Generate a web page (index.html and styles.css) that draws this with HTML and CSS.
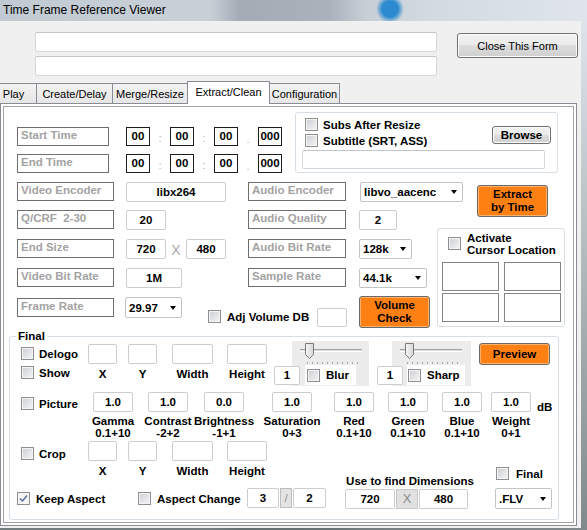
FILE: index.html
```html
<!DOCTYPE html>
<html lang="en">
<head>
    <meta charset="UTF-8">
    <title>Time Frame Reference Viewer</title>
    <link rel="stylesheet" href="styles.css">
</head>
<body>
<div class="window">
    <div class="titlebar">Time Frame Reference Viewer</div>
    <div class="client">
        <div class="top">
            <div class="paths">
                <div class="path"></div>
                <div class="path"></div>
            </div>
            <div class="btn close">Close This Form</div>
        </div>

        <div class="tabs">
            <div class="tab t-play">Play</div>
            <div class="tab t-create">Create/Delay</div>
            <div class="tab t-merge">Merge/Resize</div>
            <div class="tab t-extract active">Extract/Clean</div>
            <div class="tab t-config">Configuration</div>
        </div>

        <div class="tabctl">
            <div class="page">

                <!-- times + subtitles -->
                <div class="sec-a">
                    <div class="times">
                        <div class="row">
                            <div class="lbl w92">Start Time</div>
                            <div class="tt first">00</div><span class="sep">:</span>
                            <div class="tt">00</div><span class="sep">:</span>
                            <div class="tt">00</div><span class="sep dot">.</span>
                            <div class="tt">000</div>
                        </div>
                        <div class="row">
                            <div class="lbl w92">End Time</div>
                            <div class="tt first">00</div><span class="sep">:</span>
                            <div class="tt">00</div><span class="sep">:</span>
                            <div class="tt">00</div><span class="sep dot">.</span>
                            <div class="tt">000</div>
                        </div>
                    </div>
                    <div class="grp subs">
                        <div class="subs-top">
                            <div class="subs-checks">
                                <div class="ck"><span class="cb"></span><span class="ckt">Subs After Resize</span></div>
                                <div class="ck"><span class="cb"></span><span class="ckt">Subtitle (SRT, ASS)</span></div>
                            </div>
                            <div class="btn browse">Browse</div>
                        </div>
                        <div class="path subpath"></div>
                    </div>
                </div>

                <!-- encoders -->
                <div class="sec-b1">
                    <div class="fields">
                        <div class="row">
                            <div class="lbl w97">Video Encoder</div>
                            <div class="vb enc">libx264</div>
                            <div class="lbl w98 aud1">Audio Encoder</div>
                            <div class="combo aenc"><span>libvo_aacenc</span><span class="arr"></span></div>
                        </div>
                        <div class="row">
                            <div class="lbl w97">Q/CRF&nbsp; 2-30</div>
                            <div class="vb crf">20</div>
                            <div class="lbl w98 aud2">Audio Quality</div>
                            <div class="vb aq">2</div>
                        </div>
                    </div>
                    <div class="btn orange extract">Extract<br>by Time</div>
                </div>

                <div class="sec-b2">
                    <div class="fields2">
                        <div class="row">
                            <div class="lbl w97">End Size</div>
                            <div class="vb size">720</div>
                            <span class="xsep">X</span>
                            <div class="vb size2">480</div>
                            <div class="lbl w98 aud1">Audio Bit Rate</div>
                            <div class="combo abr"><span>128k</span><span class="arr"></span></div>
                        </div>
                        <div class="row r4">
                            <div class="lbl w97">Video Bit Rate</div>
                            <div class="vb vbr">1M</div>
                            <div class="lbl w98 aud3">Sample Rate</div>
                            <div class="combo sr"><span>44.1k</span><span class="arr"></span></div>
                        </div>
                        <div class="row r5">
                            <div class="lbl w97 fr">Frame Rate</div>
                            <div class="combo fps"><span>29.97</span><span class="arr"></span></div>
                            <div class="ck adj"><span class="cb"></span><span class="ckt">Adj Volume DB</span></div>
                            <div class="vb vol"></div>
                            <div class="btn orange volcheck">Volume<br>Check</div>
                        </div>
                    </div>
                    <div class="grp cursor">
                        <div class="cur-head">
                            <span class="cb"></span>
                            <span class="cur-text">Activate<br>Cursor Location</span>
                        </div>
                        <div class="cur-grid">
                            <div></div><div></div><div></div><div></div>
                        </div>
                    </div>
                </div>

                <!-- final -->
                <fieldset class="final">
                    <legend>Final</legend>

                    <div class="drow">
                        <div class="chkcol">
                            <div class="ck"><span class="cb"></span><span class="ckt">Delogo</span></div>
                            <div class="ck second"><span class="cb"></span><span class="ckt">Show</span></div>
                        </div>
                        <div class="fcol w29"><div class="vb"></div><div class="cap">X</div></div>
                        <div class="fcol w29 g11"><div class="vb"></div><div class="cap">Y</div></div>
                        <div class="fcol w41 g15"><div class="vb"></div><div class="cap">Width</div></div>
                        <div class="fcol w40 g14"><div class="vb"></div><div class="cap">Height</div></div>

                        <div class="vb one">1</div>
                        <div class="slider s1">
                            <div class="track"></div>
                            <svg class="thumb" width="11" height="17" viewBox="0 0 11 17">
                                <defs>
                                    <linearGradient id="tg" x1="0" y1="0" x2="1" y2="0">
                                        <stop offset="0" stop-color="#f7f7f7"/>
                                        <stop offset="1" stop-color="#d6d6d6"/>
                                    </linearGradient>
                                </defs>
                                <path d="M1.5 0.5 H9.5 V11.5 L5.5 15.5 L1.5 11.5 Z" fill="url(#tg)" stroke="#7a7a7a"/>
                            </svg>
                            <div class="ticks"></div>
                            <div class="sfoot"><span class="cb"></span><span class="ckt">Blur</span></div>
                        </div>

                        <div class="vb one two">1</div>
                        <div class="slider s2">
                            <div class="track"></div>
                            <svg class="thumb" width="11" height="17" viewBox="0 0 11 17">
                                <path d="M1.5 0.5 H9.5 V11.5 L5.5 15.5 L1.5 11.5 Z" fill="url(#tg)" stroke="#7a7a7a"/>
                            </svg>
                            <div class="ticks"></div>
                            <div class="sfoot"><span class="cb"></span><span class="ckt">Sharp</span></div>
                        </div>

                        <div class="btn orange preview">Preview</div>
                    </div>

                    <div class="prow">
                        <div class="chkcol">
                            <div class="ck"><span class="cb"></span><span class="ckt">Picture</span></div>
                        </div>
                        <div class="pcol"><div class="vb">1.0</div><div class="cap2">Gamma<br>0.1+10</div></div>
                        <div class="pcol p15"><div class="vb">1.0</div><div class="cap2">Contrast<br>-2+2</div></div>
                        <div class="pcol p16"><div class="vb">0.0</div><div class="cap2">Brightness<br>-1+1</div></div>
                        <div class="pcol p28"><div class="vb">1.0</div><div class="cap2">Saturation<br>0+3</div></div>
                        <div class="pcol p22"><div class="vb">1.0</div><div class="cap2">Red<br>0.1+10</div></div>
                        <div class="pcol p14"><div class="vb">1.0</div><div class="cap2">Green<br>0.1+10</div></div>
                        <div class="pcol p14"><div class="vb">1.0</div><div class="cap2">Blue<br>0.1+10</div></div>
                        <div class="pcol p9"><div class="vb">1.0</div><div class="cap2">Weight<br>0+1</div></div>
                        <span class="db">dB</span>
                    </div>

                    <div class="crow">
                        <div class="crow-left">
                            <div class="croprow">
                                <div class="chkcol">
                                    <div class="ck"><span class="cb"></span><span class="ckt">Crop</span></div>
                                </div>
                                <div class="fcol w29"><div class="vb"></div><div class="cap">X</div></div>
                                <div class="fcol w29 g11"><div class="vb"></div><div class="cap">Y</div></div>
                                <div class="fcol w41 g15"><div class="vb"></div><div class="cap">Width</div></div>
                                <div class="fcol w40 g14"><div class="vb"></div><div class="cap">Height</div></div>
                            </div>
                            <div class="keeprow">
                                <div class="ck keep">
                                    <span class="cb checked">
                                        <svg width="11" height="11" viewBox="0 0 11 11"><path d="M2 5.5 L4.5 8 L9 2.5" fill="none" stroke="#5a6e9c" stroke-width="1.5"/></svg>
                                    </span>
                                    <span class="ckt">Keep Aspect</span>
                                </div>
                                <div class="ck aspect"><span class="cb"></span><span class="ckt">Aspect Change</span></div>
                                <div class="vb ar1">3</div>
                                <div class="slash">/</div>
                                <div class="vb ar2">2</div>
                            </div>
                        </div>
                        <div class="dims">
                            <div class="dims-lbl">Use to find Dimensions</div>
                            <div class="dims-row">
                                <div class="vb dw">720</div>
                                <div class="xbtn">X</div>
                                <div class="vb dh">480</div>
                            </div>
                        </div>
                        <div class="fincol">
                            <div class="ck"><span class="cb"></span><span class="ckt">Final</span></div>
                            <div class="combo fmt"><span>.FLV</span><span class="arr"></span></div>
                        </div>
                    </div>
                </fieldset>

            </div>
        </div>
    </div>
</div>
</body>
</html>
```

FILE: styles.css
```css
* {
    box-sizing: border-box;
}
body {
    margin: 0;
    font-family: "Liberation Sans", Arial, sans-serif;
    font-size: 11.5px;
    font-weight: bold;
    color: #000;
}
.window {
    width: 587px;
    height: 530px;
    overflow: hidden;
    background:
        radial-gradient(circle at 390px 9px, #2c8bd0 0, #2c8bd0 8px, rgba(44,139,208,0) 14px),
        linear-gradient(180deg, rgba(0,0,0,0) 20px, rgba(50,62,60,0.55) 100%),
        linear-gradient(90deg, #c1c9d2 0, #c8d0d8 210px, #a3acb5 240px, #aab3bc 330px, #c6ced6 365px, #d3dae2 430px, #dfe5eb 587px);
}
.titlebar {
    height: 21px;
    line-height: 20px;
    padding-left: 3px;
    font-size: 12px;
    font-weight: normal;
}
.client {
    width: 581px;
    height: 507px;
    background: #f0f0f0;
    overflow: hidden;
}

/* top strip */
.top {
    display: flex;
    align-items: flex-start;
    padding-top: 11px;
}
.paths {
    margin-left: 35px;
    width: 402px;
    display: flex;
    flex-direction: column;
    gap: 4px;
}
.path {
    height: 20px;
    background: #fff;
    border: 1px solid #d3d6db;
    border-top-color: #c2c5cb;
    border-radius: 2px;
}
.btn {
    display: flex;
    align-items: center;
    justify-content: center;
    text-align: center;
    flex: none;
    border: 1px solid #707070;
    border-radius: 3px;
    background: linear-gradient(#f2f2f2 0%, #ebebeb 49%, #dddddd 50%, #cfcfcf 100%);
    box-shadow: inset 0 0 0 1px #fbfbfb;
}
.close {
    margin-left: 20px;
    margin-top: 1px;
    width: 121px;
    height: 25px;
    font-size: 11px;
    font-weight: normal;
}

/* tabs */
.tabs {
    display: flex;
    align-items: flex-end;
    height: 22px;
    margin-top: 5px;
    margin-left: -10px;
}
.tab {
    height: 20px;
    margin-right: -1px;
    border: 1px solid #898c95;
    border-bottom: 0;
    background: linear-gradient(#f3f3f3, #e6e6e6);
    font-size: 11px;
    font-weight: normal;
    display: flex;
    align-items: center;
    justify-content: center;
}
.t-play { width: 47px; }
.t-create { width: 77px; }
.t-merge { width: 76px; }
.t-extract { width: 83px; }
.t-config { width: 71px; }
.tab.active {
    height: 23px;
    margin-bottom: -1px;
    padding-bottom: 3px;
    background: #fff;
    position: relative;
    z-index: 1;
}
.tabctl {
    width: 577px;
    height: 423px;
    border: 1px solid #898c95;
    padding: 2px;
    background: #fff;
}
.page {
    height: 100%;
    border: 1px solid #a3a3a3;
    overflow: hidden;
}

/* common controls */
.row {
    display: flex;
    align-items: flex-start;
}
.lbl {
    flex: none;
    height: 19px;
    border: 1px solid #6e6e6e;
    color: #a3a3a3;
    padding-left: 3px;
    line-height: 15px;
    white-space: nowrap;
    overflow: hidden;
}
.w92 { width: 92px; }
.w97 { width: 97px; }
.w98 { width: 98px; }
.tt {
    flex: none;
    width: 24px;
    height: 19px;
    border: 1px solid #1c1c1c;
    text-align: center;
    line-height: 17px;
}
.tt.first { margin-left: 17px; }
.sep {
    width: 20px;
    height: 19px;
    text-align: center;
    color: #b4b4b4;
    font-weight: normal;
    line-height: 16px;
    padding-top: 3px;
}
.sep.dot {
    line-height: 14px;
    padding-top: 5px;
}
.vb {
    flex: none;
    height: 20px;
    background: #fff;
    border: 1px solid #cdcdcd;
    border-radius: 2px;
    text-align: center;
    line-height: 18px;
}
.combo {
    flex: none;
    height: 20px;
    background: #fff;
    border: 1px solid #c3c3c3;
    border-radius: 2px;
    padding: 0 5px 0 3px;
    display: flex;
    align-items: center;
    justify-content: space-between;
}
.arr {
    width: 0;
    height: 0;
    border-left: 3.5px solid transparent;
    border-right: 3.5px solid transparent;
    border-top: 4px solid #000;
}
.ck {
    display: flex;
    align-items: center;
}
.cb {
    flex: none;
    width: 13px;
    height: 13px;
    border: 1px solid #8e8f8f;
    background: linear-gradient(135deg, #cbced4 0%, #f6f6f6 100%);
    box-shadow: inset 0 0 0 1px #f4f4f4;
}
.cb.checked {
    background: #f4f4f4;
}
.cb.checked svg {
    display: block;
}
.ckt {
    margin-left: 5px;
    white-space: nowrap;
}
.grp {
    flex: none;
    border: 1px solid #d5dfe5;
    border-radius: 3px;
}
.orange {
    background: #ff8012;
    border-color: #6a6a6a;
    box-shadow: inset 0 0 0 1px #ffb26e;
    line-height: 13px;
}

/* section a */
.sec-a {
    display: flex;
    align-items: flex-start;
    padding-top: 5px;
}
.times {
    margin-left: 13px;
    margin-top: 15px;
    display: flex;
    flex-direction: column;
    gap: 8px;
}
.subs {
    margin-left: 13px;
    width: 263px;
    height: 61px;
}
.subs-top {
    display: flex;
    align-items: flex-start;
}
.subs-checks {
    margin-left: 9px;
    margin-top: 5px;
    display: flex;
    flex-direction: column;
    gap: 3px;
}
.browse {
    margin-left: auto;
    margin-right: 6px;
    margin-top: 13px;
    width: 59px;
    height: 18px;
}
.subpath {
    margin-left: 6px;
    margin-top: 3px;
    width: 243px;
    height: 19px;
}

/* section b */
.sec-b1 {
    display: flex;
    align-items: flex-start;
    margin-top: 9px;
}
.fields {
    margin-left: 13px;
    width: 446px;
    display: flex;
    flex-direction: column;
    gap: 8px;
}
.enc { margin-left: 12px; width: 100px; }
.crf { margin-left: 12px; width: 40px; }
.aud1 { margin-left: 22px; }
.aud2 { margin-left: 82px; }
.aud3 { margin-left: 66px; }
.aenc { margin-left: 14px; width: 103px; }
.aq { margin-left: 13px; width: 38px; }
.extract {
    margin-left: 14px;
    margin-top: 3px;
    width: 71px;
    height: 32px;
}
.sec-b2 {
    display: flex;
    align-items: flex-start;
}
.fields2 {
    margin-left: 13px;
    margin-top: 9px;
    width: 413px;
    flex: none;
}
.size { margin-left: 12px; width: 40px; }
.size2 { width: 40px; }
.xsep {
    width: 20px;
    height: 20px;
    text-align: center;
    color: #a8a8a8;
    font-weight: normal;
    font-size: 14px;
    line-height: 23px;
}
.abr { margin-left: 13px; width: 53px; }
.r4 { margin-top: 9px; }
.vbr { margin-left: 12px; width: 56px; }
.sr { margin-left: 13px; width: 68px; }
.r5 { margin-top: 8px; }
.fr { margin-top: 2px; }
.fps { margin-left: 11px; margin-top: 1px; width: 57px; height: 21px; }
.adj { margin-left: 26px; margin-top: 14px; width: 109px; }
.adj .ckt { margin-left: 6px; }
.vol { margin-top: 12px; width: 30px; height: 19px; }
.volcheck {
    margin-left: 12px;
    width: 71px;
    height: 32px;
}
.cursor {
    margin-left: 7px;
    margin-top: -2px;
    width: 128px;
    height: 99px;
}
.cur-head {
    display: flex;
    align-items: flex-start;
    height: 32px;
}
.cur-head .cb {
    margin-left: 10px;
    margin-top: 8px;
}
.cur-text {
    margin-left: 6px;
    margin-top: 3px;
    line-height: 12px;
    white-space: nowrap;
}
.cur-grid {
    margin-left: 4px;
    margin-top: 1px;
    display: grid;
    grid-template-columns: 57px 57px;
    grid-auto-rows: 29px;
    gap: 2px 5px;
}
.cur-grid div {
    border: 1px solid #838383;
}

/* final group */
.final {
    margin: 2px 0 0 5px;
    padding: 0;
    width: 550px;
    height: 190px;
    min-width: 0;
    border: 1px solid #d5dfe5;
    border-radius: 3px;
}
.final legend {
    margin-left: 6px;
    padding: 0 2px;
    line-height: 13px;
}
.drow, .prow, .croprow, .keeprow, .crow {
    display: flex;
    align-items: flex-start;
}
.drow { margin-top: -2px; }
.chkcol {
    flex: none;
    margin-left: 11px;
    width: 67px;
}
.drow .chkcol { margin-top: 6px; }
.ck.second { margin-top: 6px; }
.fcol {
    flex: none;
    display: flex;
    flex-direction: column;
    align-items: center;
}
.fcol .vb { align-self: stretch; }
.drow .fcol { margin-top: 3px; }
.w29 { width: 29px; }
.w40 { width: 40px; }
.w41 { width: 41px; }
.g11 { margin-left: 11px; }
.g14 { margin-left: 14px; }
.g15 { margin-left: 15px; }
.cap {
    margin-top: 3px;
    line-height: 14px;
    white-space: nowrap;
}
.one {
    margin-left: 7px;
    margin-top: 25px;
    width: 26px;
    height: 19px;
    line-height: 17px;
    position: relative;
    z-index: 1;
}
.one.two { margin-left: 8px; }
.slider {
    flex: none;
    position: relative;
    height: 45px;
    background: #ececec;
    padding-top: 8px;
}
.s1 { margin-left: -8px; width: 77px; }
.s2 { margin-left: -11px; width: 79px; }
.track {
    margin-left: 8px;
    width: 62px;
    height: 3px;
    border-top: 1px solid #a2a2a2;
    border-bottom: 1px solid #fff;
    background: #dedede;
}
.thumb {
    position: absolute;
    left: 12px;
    top: 2px;
}
.ticks {
    margin-left: 15px;
    margin-top: 10px;
    width: 51px;
    height: 2px;
    background: repeating-linear-gradient(90deg, #a6a6a6 0, #a6a6a6 1px, transparent 1px, transparent 5px);
}
.sfoot {
    display: flex;
    align-items: center;
    height: 20px;
    margin-top: 1px;
    background: #fff;
}
.s1 .sfoot { margin-left: 13px; width: 51px; padding-left: 2px; }
.s2 .sfoot { margin-left: 15px; width: 58px; padding-left: 1px; }
.sfoot .ckt { margin-left: 6px; }
.preview {
    margin-left: 8px;
    margin-top: 2px;
    width: 71px;
    height: 22px;
}

.prow { margin-top: 6px; }
.prow .chkcol { width: 72px; margin-top: 5px; }
.pcol {
    flex: none;
    width: 40px;
    display: flex;
    flex-direction: column;
    align-items: center;
}
.pcol .vb { align-self: stretch; }
.cap2 {
    margin-top: 3px;
    line-height: 12px;
    text-align: center;
    white-space: nowrap;
}
.p9 { margin-left: 9px; }
.p14 { margin-left: 14px; }
.p15 { margin-left: 15px; }
.p16 { margin-left: 16px; }
.p22 { margin-left: 22px; }
.p28 { margin-left: 28px; }
.db {
    margin-left: 6px;
    margin-top: 9px;
}

.crow { margin-top: 2px; }
.crow-left {
    flex: none;
    width: 316px;
}
.croprow .chkcol { margin-top: 6px; }
.keeprow { margin-top: 9px; }
.keep {
    margin-left: 7px;
    margin-top: 5px;
    width: 121px;
}
.keep .ckt, .aspect .ckt { margin-left: 6px; }
.aspect {
    margin-top: 5px;
    width: 109px;
}
.ar1 { width: 32px; margin-top: 1px; }
.slash {
    flex: none;
    margin-left: 1px;
    margin-top: 1px;
    width: 12px;
    height: 20px;
    background: #e4e4e4;
    border: 1px solid #bdbdbd;
    color: #8c8c8c;
    font-weight: normal;
    text-align: center;
    line-height: 18px;
}
.ar2 { margin-left: 1px; margin-top: 1px; width: 33px; }
.dims {
    flex: none;
    margin-left: 19px;
    margin-top: 34px;
    width: 130px;
}
.dims-lbl {
    text-align: center;
    line-height: 13px;
    white-space: nowrap;
}
.dims-row {
    display: flex;
    margin-top: 1px;
}
.dw { width: 50px; }
.dh { width: 49px; margin-left: 1px; }
.xbtn {
    margin-left: 1px;
    width: 22px;
    height: 20px;
    background: #e1e1e1;
    border: 1px solid #c6c6c6;
    color: #8a8a8a;
    font-weight: normal;
    font-size: 13px;
    text-align: center;
    line-height: 18px;
}
.fincol {
    flex: none;
    margin-left: 20px;
    margin-top: 26px;
}
.fincol .cb { margin-left: 1px; }
.fincol .ckt { margin-left: 7px; }
.fmt {
    margin-top: 8px;
    width: 57px;
    height: 21px;
}
```
